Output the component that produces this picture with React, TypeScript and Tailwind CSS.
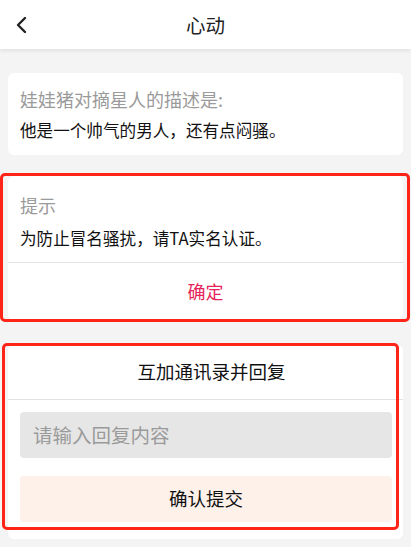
import React from "react";

export default function App() {
  return (
    <div
      className="min-h-[547px] w-[411px] bg-[#f4f4f4] pb-4"
      style={{ fontFamily: '"Noto Sans CJK SC", "Noto Sans", sans-serif' }}
    >
      <div className="relative z-10 flex h-[49px] items-center justify-center bg-white shadow-[0_2px_4px_rgba(0,0,0,0.08)]">
        <svg
          className="absolute left-[14px] top-[15px]"
          width="16"
          height="20"
          viewBox="0 0 16 20"
          fill="none"
        >
          <polyline
            points="11,3 4,10 11,17"
            stroke="#222"
            strokeWidth="2.4"
            strokeLinecap="round"
            strokeLinejoin="round"
          />
        </svg>
        <span className="text-[19.5px] leading-6 text-[#222]">心动</span>
      </div>

      <div className="mx-2 mt-6 rounded-md bg-white px-3 pb-[14px] pt-[14px]">
        <div className="text-[18px] leading-6 text-[#9a9a9a]">娃娃猪对摘星人的描述是:</div>
        <div className="mt-2 text-[16.6px] leading-[22px] text-[#111]">他是一个帅气的男人，还有点闷骚。</div>
      </div>

      <div className="relative mx-2 mt-[21px] rounded-md bg-white">
        <div className="px-3 pb-[13px] pt-[17px]">
          <div className="text-[18px] leading-6 text-[#9a9a9a]">提示</div>
          <div className="mt-[10px] text-[16.6px] leading-[22px] text-[#111]">为防止冒名骚扰，请TA实名认证。</div>
        </div>
        <div className="h-px bg-[#e2e2e2]" />
        <div className="flex h-[57px] items-center justify-center text-[18px] text-[#e6245a]">确定</div>
        <div className="pointer-events-none absolute -bottom-[2px] -left-2 -right-[7px] -top-[3px] rounded-[5px] border-[3px] border-[#ff2418]" />
      </div>

      <div className="relative mx-2 mt-[25px] rounded-md bg-white pb-[17px]">
        <div className="flex h-[54px] items-center justify-center pl-3 text-[18.5px] text-[#111]">互加通讯录并回复</div>
        <div className="h-px bg-[#e2e2e2]" />
        <div className="ml-3 mr-[11px] mt-3 flex h-[46px] items-center rounded bg-[#e6e6e6] px-[13px] text-[19.5px] text-[#9a9a9a]">
          请输入回复内容
        </div>
        <div className="ml-3 mr-[11px] mt-[18px] flex h-[46px] items-center justify-center rounded bg-[#fdf1ea] text-[18.5px] text-[#111]">
          确认提交
        </div>
        <div className="pointer-events-none absolute -left-[6px] -top-[2px] bottom-[9px] right-1 rounded-[5px] border-[3px] border-[#ff2418]" />
      </div>
    </div>
  );
}
